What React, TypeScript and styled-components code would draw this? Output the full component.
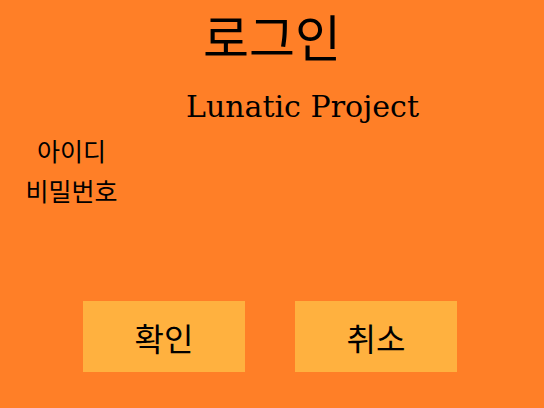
import React from "react";
import styled, { createGlobalStyle } from "styled-components";

const GlobalStyle = createGlobalStyle`
  html, body {
    margin: 0;
    padding: 0;
  }
  body {
    font-family: "Noto Sans CJK KR", "Noto Sans", sans-serif;
    color: #000;
  }
`;

const Page = styled.div`
  width: 544px;
  height: 408px;
  background: #ff7f27;
  display: flex;
  flex-direction: column;
  overflow: hidden;
`;

const Title = styled.h1`
  margin: 0;
  font-size: 50px;
  font-weight: 400;
  line-height: 70px;
  text-align: center;
`;

const Subtitle = styled.h2`
  margin: 17px 0 0;
  padding-left: 61px;
  font-family: "DejaVu Serif", serif;
  font-size: 30px;
  font-weight: 400;
  line-height: 40px;
  text-align: center;
`;

const Form = styled.div`
  margin-top: 3px;
  display: grid;
  grid-template-columns: 143px 1fr;
`;

const Label = styled.label`
  font-size: 25px;
  line-height: 40px;
  text-align: center;
`;

const Buttons = styled.div`
  margin-top: auto;
  margin-bottom: 36px;
  display: flex;
  justify-content: center;
  gap: 50px;
  padding-right: 4px;
`;

const Button = styled.button`
  width: 162px;
  height: 71px;
  border: none;
  background: #ffb13f;
  font-family: "Noto Sans CJK KR", sans-serif;
  font-size: 32px;
  color: #000;
  padding: 0;
  cursor: pointer;
`;

export default function App() {
  return (
    <Page>
      <GlobalStyle />
      <Title>로그인</Title>
      <Subtitle>Lunatic Project</Subtitle>
      <Form>
        <Label>아이디</Label>
        <span />
        <Label>비밀번호</Label>
        <span />
      </Form>
      <Buttons>
        <Button>확인</Button>
        <Button>취소</Button>
      </Buttons>
    </Page>
  );
}
